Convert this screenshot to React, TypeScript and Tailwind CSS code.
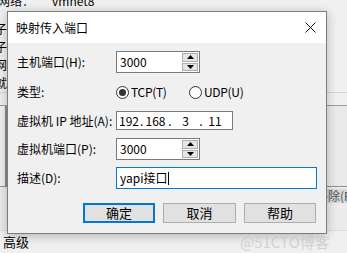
import React from "react"

const font = "font-['Noto_Sans_CJK_SC','Noto_Sans',sans-serif]"

function SpinBox({ value }: { value: string }) {
  return (
    <div className="flex h-[22px] w-[84px] border border-[#7a7a7a] bg-white">
      <div className="flex flex-1 items-center pl-[3px] text-[12px] text-black">{value}</div>
      <div className="flex w-[17px] flex-col gap-[1px] py-[1px] pr-[1px]">
        <div className="flex flex-1 items-center justify-center border border-[#adadad] bg-[#e5e5e5]">
          <svg width="7" height="4" viewBox="0 0 7 4">
            <path d="M0 4 L3.5 0 L7 4 Z" fill="#000" />
          </svg>
        </div>
        <div className="flex flex-1 items-center justify-center border border-[#adadad] bg-[#e5e5e5]">
          <svg width="7" height="4" viewBox="0 0 7 4">
            <path d="M0 0 L3.5 4 L7 0 Z" fill="#000" />
          </svg>
        </div>
      </div>
    </div>
  )
}

function Radio({ checked, label }: { checked?: boolean; label: string }) {
  return (
    <div className="flex items-center">
      <div className="flex h-[13px] w-[13px] items-center justify-center rounded-full border border-[#333] bg-white">
        {checked && <div className="h-[7px] w-[7px] rounded-full bg-[#333]" />}
      </div>
      <span className="ml-[2px] text-[12px] tracking-[-0.3px]">{label}</span>
    </div>
  )
}

function Row({ label, children, className }: { label: string; children: React.ReactNode; className: string }) {
  return (
    <div className={`flex items-center ${className}`}>
      <div className="w-[99px] text-[12px]">{label}</div>
      {children}
    </div>
  )
}

export default function App() {
  return (
    <div className={`relative h-[253px] w-[347px] overflow-hidden bg-[#f0f0f0] text-black ${font}`}>
      {/* 背景窗口 */}
      <div className="flex flex-col text-[12px]">
        <div className="-mt-[7px] flex h-[16px] items-center">
          <span className="-ml-[2px]">网络：</span>
          <span className="ml-[18px]">vmnet8</span>
        </div>
        <div className="mt-[11px] flex h-[18px] items-center -ml-[5px]">子网</div>
        <div className="flex h-[18px] items-center -ml-[5px]">子网</div>
        <div className="flex h-[18px] items-center -ml-[5px]">网关</div>
        <div className="flex h-[18px] items-center -ml-[5px]">就绪</div>
        <div className="h-[1px] bg-[#d6d6d6]" />
        <div className="h-[12px]" />
        <div className="h-[1px] bg-[#9c9c9c]" />
        <div className="ml-[5px] h-[80px] border-l-2 border-[#8a8a8a] bg-gradient-to-r from-[#f7f7f7] to-[#e9e9e9]" />
        <div className="h-[1px] bg-[#8f8f8f]" />
        <div className="flex h-[43px] overflow-hidden bg-[#ececec]">
          <div className="ml-[314px] mt-[2px] h-[14px] shrink-0 whitespace-nowrap bg-[#d8d8d8] pl-[2px] text-[12px] leading-[14px] text-[#555]">移除(R)</div>
        </div>
        <div className="h-[1px] bg-[#dcdcdc]" />
        <div className="flex h-[22px] items-center pl-[3px] text-[13px]">高级</div>
      </div>

      {/* 对话框 */}
      <div className="absolute left-[7px] top-[11px] flex h-[223px] w-[320px] flex-col border border-[#7d7d7d] bg-[#f0f0f0] shadow-[0_2px_10px_rgba(0,0,0,0.25)]">
        <div className="flex h-[31px] items-center justify-between bg-white pl-[8px] pr-[10px]">
          <span className="text-[12px]">映射传入端口</span>
          <svg width="11" height="11" viewBox="0 0 11 11">
            <path d="M0.5 0.5 L10.5 10.5 M10.5 0.5 L0.5 10.5" stroke="#111" strokeWidth="1" />
          </svg>
        </div>
        <div className="flex flex-col pl-[9px]">
          <Row label="主机端口(H):" className="mt-[8px] h-[22px]">
            <SpinBox value="3000" />
          </Row>
          <Row label="类型:" className="mt-[8px] h-[22px]">
            <div className="w-[73px]">
              <Radio checked label="TCP(T)" />
            </div>
            <Radio label="UDP(U)" />
          </Row>
          <Row label="虚拟机 IP 地址(A):" className="mt-[8px] h-[19px]">
            <div className="flex h-[19px] w-[117px] items-center border border-[#7a7a7a] bg-white pl-[1px] text-[12px]">
              <span className="w-[22px] text-center">192</span>
              <span className="w-[3px] text-center">.</span>
              <span className="w-[25px] text-center">168</span>
              <span className="w-[4px] text-center">.</span>
              <span className="w-[27px] text-center">3</span>
              <span className="w-[4px] text-center">.</span>
              <span className="w-[24px] text-center">11</span>
            </div>
          </Row>
          <Row label="虚拟机端口(P):" className="mt-[8px] h-[22px]">
            <SpinBox value="3000" />
          </Row>
          <Row label="描述(D):" className="mt-[7px] h-[22px]">
            <div className="flex h-[22px] w-[201px] items-center border border-[#0078d7] bg-white pl-[3px] text-[12px]">
              yapi接口
              <span className="ml-[1px] h-[13px] w-[1px] bg-black" />
            </div>
          </Row>
          <div className="mt-[14px] flex justify-end gap-[8px] pr-[10px] text-[13px]">
            <button className="flex h-[20px] w-[72px] items-center justify-center border-2 border-[#0078d7] bg-[#e1e1e1]">确定</button>
            <button className="flex h-[20px] w-[73px] items-center justify-center border border-[#adadad] bg-[#e1e1e1]">取消</button>
            <button className="flex h-[20px] w-[72px] items-center justify-center border border-[#adadad] bg-[#e1e1e1]">帮助</button>
          </div>
        </div>
      </div>

      {/* 水印 */}
      <div className="absolute left-[240px] top-[231px] text-[15px] text-[#c8c8c8]/80">@51CTO博客</div>
    </div>
  )
}
